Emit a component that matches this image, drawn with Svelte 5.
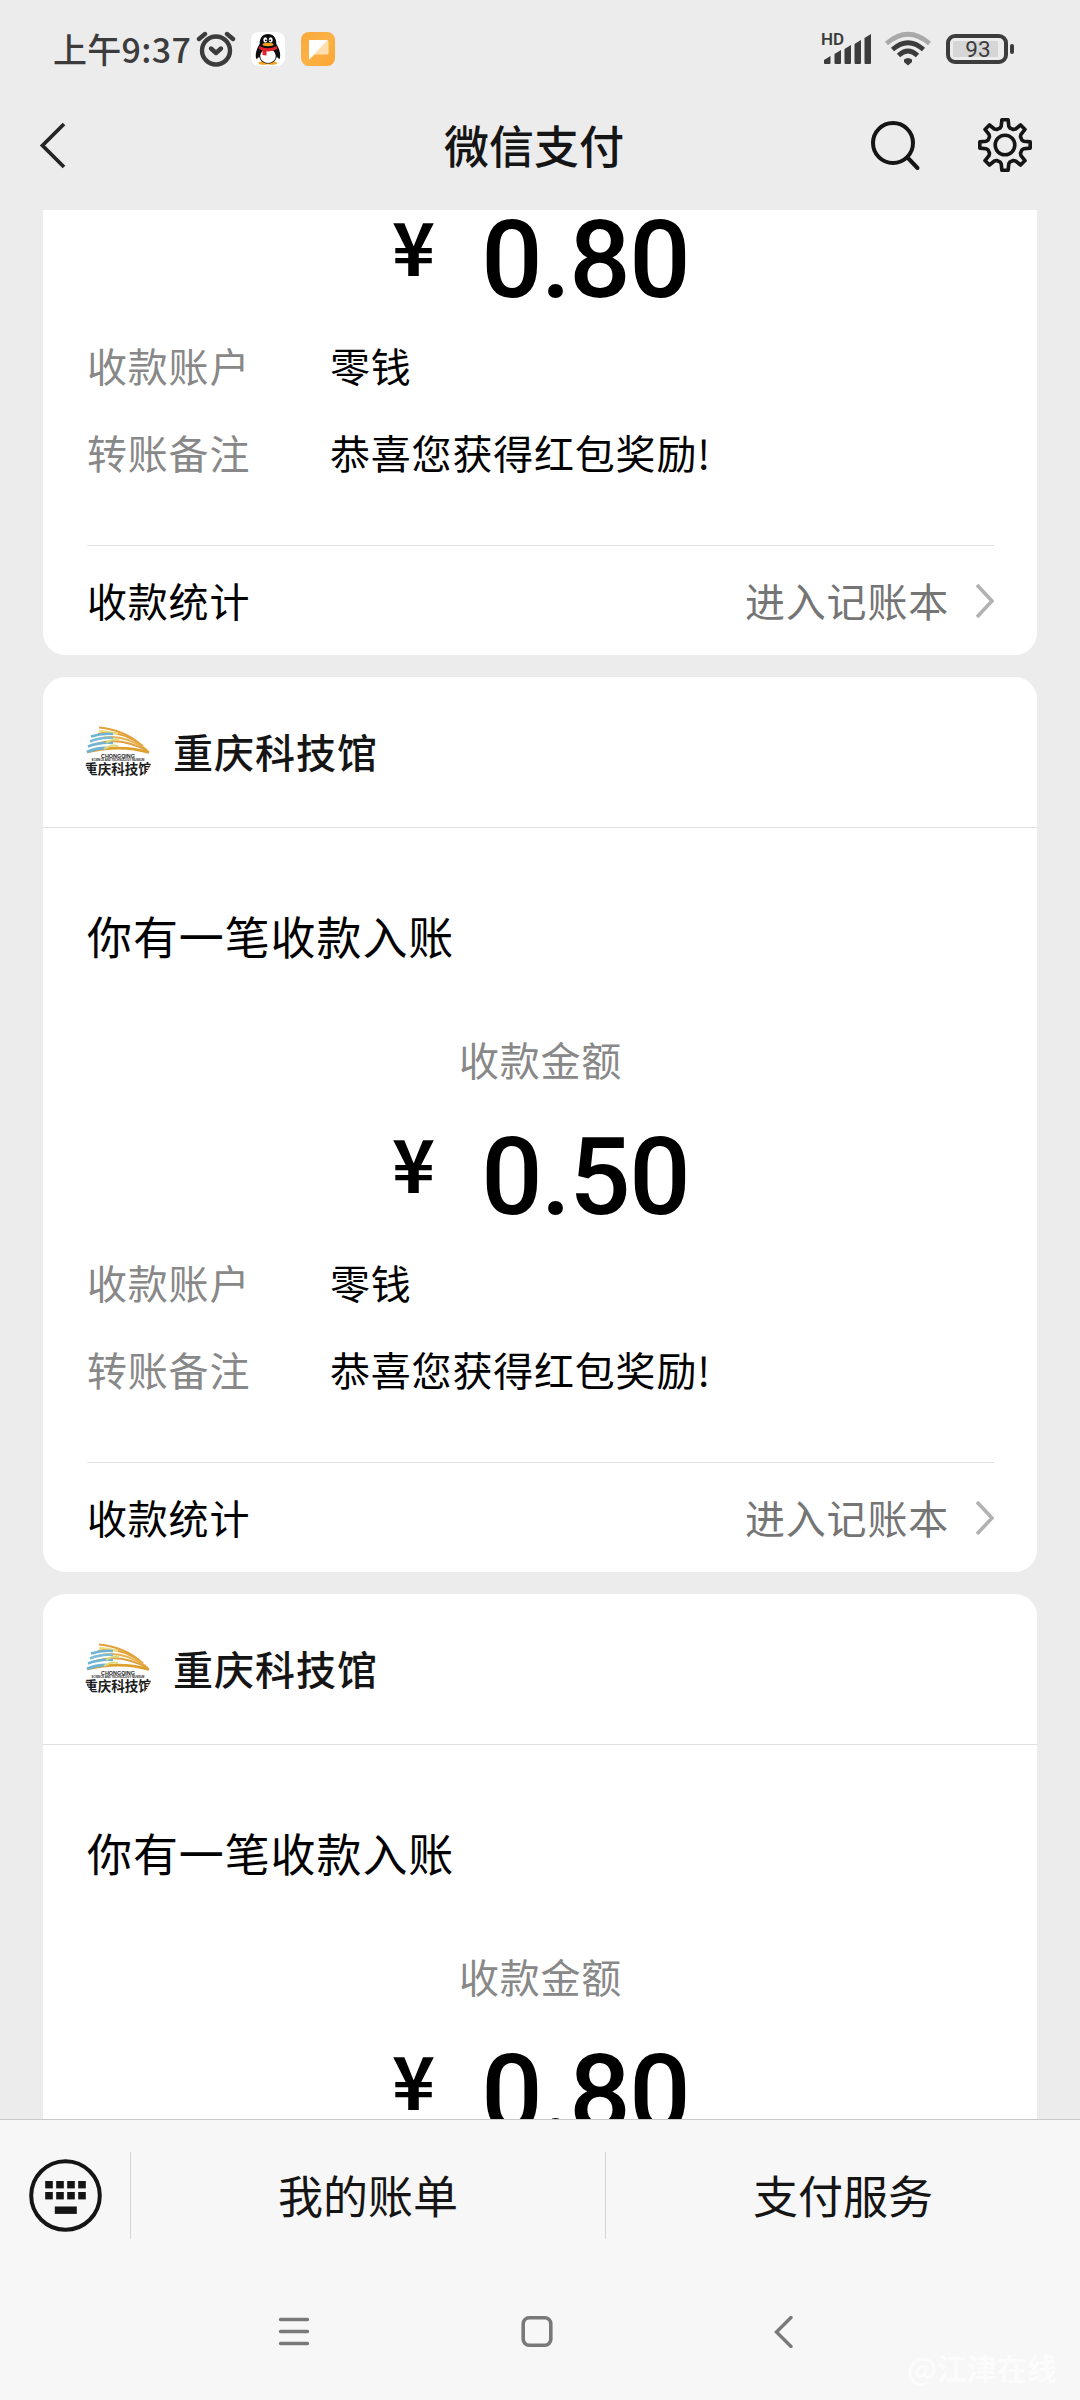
<script>
    // the list is scrolled, so the first bill has lost its top and the last one its bottom
    const bills = [
        { id: 1, amount: "0.80", top: false, bottom: true },
        { id: 2, amount: "0.50", top: true, bottom: true },
        { id: 3, amount: "0.80", top: true, bottom: false }
    ];

    const rows = [
        { label: "收款账户", value: "零钱" },
        { label: "转账备注", value: "恭喜您获得红包奖励!" }
    ];

    const menu = ["我的账单", "支付服务"];

    const keys = [0, 1, 2, 3];

    // outline of an eight-toothed gear centred on 0,0
    function gear() {
        const points = [];
        for(let i = 0; i < 8; i++) {
            const mid = i * 45 - 90;
            for(let [offset, radius] of [[-17, 17.6], [-11.5, 19.2], [-7, 25.4], [7, 25.4], [11.5, 19.2], [17, 17.6]]) {
                const angle = (mid + offset) * Math.PI / 180;
                points.push(`${(radius * Math.cos(angle)).toFixed(1)} ${(radius * Math.sin(angle)).toFixed(1)}`);
            }
        }
        return `M${points.join("L")}Z`;
    }
</script>

<div class="phone">
    <header>
        <div class="status">
            <span class="time">上午9:37</span>
            <svg class="alarm" width="40" height="38" viewBox="0 0 40 38">
                <g fill="none" stroke="#3c3c3c" stroke-width="4.400" stroke-linecap="round" stroke-linejoin="round">
                    <circle cx="20" cy="20.500" r="14" />
                    <path d="M15 18.500L20 23L25 18.500" />
                    <path d="M3 9L9 4M31 4L37 9" />
                </g>
            </svg>
            <svg class="qq" width="34" height="34" viewBox="0 0 34 34">
                <rect width="34" height="34" rx="8" fill="#fff" />
                <ellipse cx="12.500" cy="31" rx="5" ry="1.800" fill="#f5a21d" />
                <ellipse cx="21" cy="31" rx="5" ry="1.800" fill="#f5a21d" />
                <path d="M17 2C11.500 2 8.500 6 8.700 12C5.500 17 4 22 5.200 26.500C6 27.500 7.500 26 8 24.500C9.500 29 12 31.500 17 31.500S24.500 29 26 24.500C26.500 26 28 27.500 28.800 26.500C30 22 28.500 17 25.300 12C25.500 6 22.500 2 17 2Z" fill="#0c0c0c" />
                <ellipse cx="17" cy="24" rx="7.800" ry="7" fill="#fff" />
                <ellipse cx="14.300" cy="8" rx="2" ry="2.700" fill="#fff" />
                <ellipse cx="19.700" cy="8" rx="2" ry="2.700" fill="#fff" />
                <circle cx="14.900" cy="8.300" r=".9" />
                <circle cx="19.100" cy="8.300" r=".9" />
                <ellipse cx="17" cy="12.500" rx="5.500" ry="1.700" fill="#f5a21d" />
                <path d="M8.500 14Q17 18.500 25.500 14L26.300 17Q21 19.800 15.500 19.300V23.500L11.500 23V18.500L8 17Z" fill="#e2232b" />
            </svg>
            <svg class="chat" width="34" height="34" viewBox="0 0 34 34">
                <defs>
                    <linearGradient id="orange" x1="0" y1="0" x2="1" y2="1">
                        <stop offset="0" stop-color="#f9a83a" />
                        <stop offset=".5" stop-color="#fbb247" />
                        <stop offset="1" stop-color="#fca530" />
                    </linearGradient>
                </defs>
                <rect width="34" height="34" rx="8" fill="url(#orange)" />
                <path d="M9 8H26Q27.500 8 27.500 9.500V21Q27.500 22.500 26 22.500H14L8 27.500V9Q8 8 9 8Z" fill="#fee0b0" />
                <path d="M9 8H26.500L8 27.500V9Q8 8 9 8Z" fill="#fff" />
            </svg>
            <span class="spacer"></span>
            <div class="signal">
                <span class="hd">HD</span>
                <svg width="50" height="34" viewBox="0 0 50 34">
                    <g fill="#3c3c3c">
                        <path d="M1 28L7.500 24V31Q7.500 32 6.500 32H2Q1 32 1 31Z" />
                        <path d="M11.500 22L18 18V31Q18 32 17 32H12.500Q11.500 32 11.500 31Z" />
                        <path d="M21.500 17L28 13V31Q28 32 27 32H22.500Q21.500 32 21.500 31Z" />
                        <path d="M31.500 12L38 8V31Q38 32 37 32H32.500Q31.500 32 31.500 31Z" />
                        <path d="M41.500 6L48 2V31Q48 32 47 32H42.500Q41.500 32 41.500 31Z" />
                    </g>
                </svg>
            </div>
            <svg class="wifi" width="48" height="36" viewBox="0 0 48 36">
                <g fill="none" stroke="#3c3c3c" stroke-width="4.800">
                    <path d="M2.500 12.500Q24 -6 45.500 12.500" stroke="#a9a9a9" />
                    <path d="M8.500 18.500Q24 5 39.500 18.500" />
                    <path d="M14.500 24.500Q24 15.500 33.500 24.500" />
                </g>
                <path d="M20 28.500Q24 25.500 28 28.500V31L24 34.500L20 31Z" fill="#3c3c3c" />
            </svg>
            <div class="battery">
                <div class="cell"><span>93</span></div>
                <div class="tip"></div>
            </div>
        </div>
        <div class="bar">
            <svg width="30" height="50" viewBox="0 0 30 50">
                <path d="M26 3L4.500 24.500L26 46" fill="none" stroke="#252525" stroke-width="3.800" />
            </svg>
            <h1>微信支付</h1>
            <div class="actions">
                <svg width="52" height="52" viewBox="0 0 52 52">
                    <g fill="none" stroke="#151515" stroke-width="4">
                        <circle cx="24" cy="23" r="20" />
                        <path d="M38.500 37.500L48.500 48" stroke-linecap="round" />
                    </g>
                </svg>
                <svg width="56" height="56" viewBox="-28 -27 56 56">
                    <g fill="none" stroke="#151515" stroke-width="3.600" stroke-linejoin="round">
                        <path d={gear()} />
                        <circle r="9.800" />
                    </g>
                </svg>
            </div>
        </div>
    </header>

    <main>
        {#each bills as bill (bill.id)}
            <section class="card" class:headless={!bill.top}>
                {#if bill.top}
                    <div class="merchant">
                        <div class="logo">
                            <svg width="64" height="28" viewBox="0 0 64 28">
                                <g fill="none" stroke-width="2">
                                    <path d="M13 1.500Q38 4 54 18" stroke="#e3a03c" />
                                    <path d="M12 8Q34 3 57 20" stroke="#e0a33c" />
                                    <path d="M12 13Q34 6 60 23" stroke="#eab04a" />
                                    <path d="M10 18Q34 10 62 25" stroke="#e0a040" />
                                    <path d="M1 26Q34 18 63 26.500" stroke="#dda02e" stroke-width="2.600" />
                                    <path d="M13 5Q21 5 32 8" stroke="#efdc78" />
                                    <path d="M5 10.500Q16 7 27 8" stroke="#6fb3d3" stroke-width="2.600" />
                                    <path d="M4 15.500Q15 11 27 12" stroke="#7bbcd6" stroke-width="2.600" />
                                    <path d="M2 20.500Q14 16 27 17" stroke="#6fb3d3" stroke-width="2.600" />
                                    <path d="M1 26Q10 22 20 22" stroke="#6fb3d3" stroke-width="3" />
                                    <path d="M20 17Q28 12 33 14M18 23Q26 18 32 20" stroke="#dcd779" />
                                </g>
                            </svg>
                            <span class="logo-en">CHONGQING</span>
                            <span class="logo-sub">SCIENCE AND TECHNOLOGY MUSEUM</span>
                            <span class="logo-cn">重庆科技馆</span>
                        </div>
                        <span class="name">重庆科技馆</span>
                    </div>
                {/if}
                <div class="body">
                    {#if bill.top}
                        <h2>你有一笔收款入账</h2>
                        <p class="caption">收款金额</p>
                    {/if}
                    <p class="amount"><span class="yen">¥</span><span class="sum">{bill.amount}</span></p>
                    {#if bill.bottom}
                        <dl>
                            {#each rows as row}
                                <dt>{row.label}</dt>
                                <dd>{row.value}</dd>
                            {/each}
                        </dl>
                        <div class="stats">
                            <span>收款统计</span>
                            <span class="link">
                                进入记账本
                                <svg width="20" height="36" viewBox="0 0 20 36">
                                    <path d="M3 3L18 19L3 35" fill="none" stroke="#b2b2b2" stroke-width="3.600" />
                                </svg>
                            </span>
                        </div>
                    {/if}
                </div>
            </section>
        {/each}
    </main>

    <footer>
        <div class="menu">
            <div class="keyboard">
                <svg width="74" height="74" viewBox="0 0 74 74">
                    <circle cx="37.500" cy="37.500" r="34.300" fill="none" stroke="#151515" stroke-width="4" />
                    <g fill="#151515">
                        {#each keys as key}
                            <rect x={17.2 + key * 11} y="23" width="7.600" height="7.400" />
                            <rect x={17.2 + key * 11} y="34" width="7.600" height="7.400" />
                        {/each}
                        <rect x="26.800" y="48.500" width="22" height="7.400" />
                    </g>
                </svg>
            </div>
            {#each menu as item}
                <div class="item">{item}</div>
            {/each}
        </div>
        <nav>
            <svg width="34" height="34" viewBox="0 0 34 34">
                <path d="M3.500 5.500H30.500M3.500 17.500H30.500M3.500 29.500H30.500" stroke="#797979" stroke-width="3.400" stroke-linecap="round" />
            </svg>
            <svg width="34" height="34" viewBox="0 0 34 34">
                <rect x="3.200" y="3.700" width="27.600" height="27.600" rx="6" fill="none" stroke="#797979" stroke-width="3.600" />
            </svg>
            <svg width="34" height="34" viewBox="0 0 34 34">
                <path d="M28 3.500L13.500 18L28 32.500" fill="none" stroke="#797979" stroke-width="3.400" stroke-linecap="round" />
            </svg>
        </nav>
        <span class="watermark">@江津在线</span>
    </footer>
</div>

<style>
    :global(body) {
        background: #ececec;
    }

    .phone {
        width: 1080px;
        height: 2400px;
        display: flex;
        flex-direction: column;
        overflow: hidden;
        background: #ececec;
        color: #000;
        font-family: "Noto Sans CJK SC", "Liberation Sans", sans-serif;
    }

    svg {
        display: block;
        flex: none;
    }

    h1, h2, p, dl, dd {
        margin: 0;
        font-weight: 400;
    }

    header {
        flex: none;
        height: 210px;
        display: flex;
        flex-direction: column;
    }

    .status {
        height: 98px;
        display: flex;
        align-items: center;
        padding: 0 66px 0 53px;
        color: #3c3c3c;
    }

    .time {
        width: 143px;
        white-space: nowrap;
        font-size: 34px;
        font-weight: 500;
        line-height: 50px;
        letter-spacing: .3px;
    }

    .qq {
        margin-left: 15px;
    }

    .chat {
        margin-left: 16px;
    }

    .spacer {
        flex: 1;
    }

    .signal {
        display: flex;
        position: relative;
        margin-right: 11px;
    }

    .hd {
        position: absolute;
        left: -2px;
        top: -2px;
        font: 600 17px/18px Roboto, sans-serif;
    }

    .wifi {
        margin-right: 14px;
    }

    .battery {
        display: flex;
        align-items: center;
        gap: 2px;
    }

    .cell {
        width: 62px;
        height: 30px;
        box-sizing: border-box;
        padding: 3px;
        border: 4px solid #3c3c3c;
        border-radius: 9px;
    }

    .cell span {
        display: block;
        width: 45px;
        height: 16px;
        background: #d6d6d6;
        font: 400 22.500px/17px Roboto, sans-serif;
        text-align: center;
        text-indent: 5px;
    }

    .tip {
        width: 4px;
        height: 10px;
        border-radius: 2px;
        background: #3c3c3c;
    }

    .bar {
        height: 96px;
        display: grid;
        grid-template-columns: 1fr auto 1fr;
        align-items: center;
        padding: 0 47px 0 38px;
    }

    h1 {
        font-size: 45px;
        font-weight: 500;
        line-height: 60px;
        margin-left: -3px;
        padding-bottom: 3px;
        color: #151515;
    }

    .actions {
        display: flex;
        justify-content: flex-end;
        align-items: center;
        gap: 56px;
    }

    main {
        flex: 1;
        min-height: 0;
        overflow: hidden;
        display: flex;
        flex-direction: column;
        gap: 22px;
        padding: 0 43px;
    }

    .card {
        flex: none;
        height: 895px;
        box-sizing: border-box;
        border-radius: 22px;
        background: #fff;
    }

    .headless {
        height: 483px;
        margin-top: -38px;
    }

    .merchant {
        height: 151px;
        box-sizing: border-box;
        display: flex;
        align-items: center;
        gap: 23px;
        padding: 0 43px;
        border-bottom: 1px solid #dfdfdf;
    }

    .logo {
        width: 64px;
        height: 64px;
        box-sizing: border-box;
        padding-top: 6px;
        display: flex;
        flex-direction: column;
        align-items: center;
        white-space: nowrap;
        color: #1c1c1c;
        clip-path: circle(35px);
    }

    .logo-en {
        font: 700 5.400px/5px "Liberation Sans", sans-serif;
    }

    .logo-sub {
        font: 700 2.800px/3px "Liberation Sans", sans-serif;
    }

    .logo-cn {
        font-size: 13.500px;
        font-weight: 700;
        line-height: 13px;
    }

    .name {
        padding-bottom: 2px;
        font-size: 40px;
        font-weight: 500;
        letter-spacing: 1px;
        color: #151515;
    }

    .body {
        padding: 0 43px 0 44px;
    }

    h2 {
        padding-top: 78px;
        font-size: 45px;
        line-height: 60px;
        letter-spacing: .9px;
    }

    .caption {
        margin-top: 63px;
        font-size: 40px;
        line-height: 60px;
        letter-spacing: .8px;
        text-align: center;
        color: #888;
    }

    .amount {
        height: 132px;
        display: flex;
        justify-content: center;
        align-items: flex-start;
        gap: 46px;
    }

    .yen {
        font-size: 73px;
        font-weight: 700;
        line-height: 80px;
        margin-top: 32px;
    }

    .sum {
        font: 500 108px/120px Roboto, sans-serif;
        letter-spacing: -1.600px;
        margin-top: 28px;
    }

    dl {
        display: grid;
        grid-template-columns: 243px 1fr;
        font-size: 40px;
        line-height: 87px;
        letter-spacing: .8px;
        margin-top: 18px;
    }

    dt {
        color: #888;
    }

    .stats {
        margin-top: 49px;
        height: 107px;
        display: flex;
        justify-content: space-between;
        align-items: center;
        border-top: 1px solid #dfdfdf;
        font-size: 40px;
        letter-spacing: .8px;
    }

    .link {
        display: flex;
        align-items: center;
        gap: 25px;
        color: #757575;
    }

    footer {
        flex: none;
        height: 281px;
        box-sizing: border-box;
        border-top: 1px solid #c9c9c9;
        background: #f7f7f7;
        position: relative;
    }

    .menu {
        height: 150px;
        display: flex;
        align-items: center;
    }

    .keyboard {
        width: 130px;
        display: flex;
        justify-content: center;
    }

    .item {
        flex: 1;
        height: 87px;
        box-sizing: border-box;
        border-left: 1px solid #d6d6d6;
        font-size: 45px;
        line-height: 85px;
        text-align: center;
        color: #151515;
    }

    nav {
        height: 122px;
        display: flex;
        justify-content: center;
        align-items: center;
        gap: 209px;
        padding-right: 6px;
    }

    .watermark {
        position: absolute;
        right: 23px;
        bottom: 11px;
        font-size: 30px;
        font-weight: 700;
        line-height: 44px;
        color: #fcfcfc;
    }
</style>
